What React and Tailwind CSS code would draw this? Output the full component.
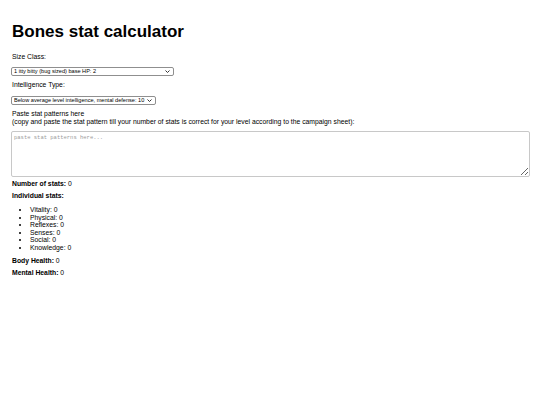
import React, { useState } from 'react';

const STATS = ['Vitality', 'Physical', 'Reflexes', 'Senses', 'Social', 'Knowledge'];

// Small select with a drawn chevron over it
function SmallSelect({ value, options, width }) {
	return (
		<div className={`relative ${width}`}>
			<select
				defaultValue={value}
				className="appearance-none block w-full h-[9px] border border-[#8f8f8f] rounded-[2px] bg-white text-[5.6px] leading-[7px] pl-[2px] pr-[5px] text-black outline-none"
			>
				{options.map(opt => (
					<option key={opt}>{opt}</option>
				))}
			</select>
			<svg className="absolute right-[4px] top-[3px] w-[5px] h-[3px] pointer-events-none" viewBox="0 0 10 6">
				<path d="M1 1 L5 5 L9 1" fill="none" stroke="#333" strokeWidth="2" />
			</svg>
		</div>
	);
}

export default function App() {
	const [text, setText] = useState('');

	return (
		<div className="min-h-[405px] bg-white pl-[12px] pr-[10px] text-black font-['Liberation_Sans',Arial,sans-serif] text-[6.8px] leading-[8px]">
			<h1 className="pt-[22px] text-[17px] leading-[20px] font-bold">Bones stat calculator</h1>

			<div className="mt-[11px]">Size Class:</div>
			<div className="mt-[6px] -ml-[1px]">
				<SmallSelect value="1 itty bitty (bug sized) base HP: 2" options={['1 itty bitty (bug sized) base HP: 2']} width="w-[163px]" />
			</div>

			<div className="mt-[5px]">Intelligence Type:</div>
			<div className="mt-[7px] -ml-[1px]">
				<SmallSelect
					value="Below average level intelligence, mental defense: 10"
					options={['Below average level intelligence, mental defense: 10']}
					width="w-[145px]"
				/>
			</div>

			<div className="mt-[5px] leading-[7.5px]">
				<div>Paste stat patterns here</div>
				<div>(copy and paste the stat pattern till your number of stats is correct for your level according to the campaign sheet):</div>
			</div>

			<textarea
				value={text}
				onChange={e => setText(e.target.value)}
				placeholder="paste stat patterns here..."
				className="block mt-[6px] -ml-[1px] w-[519px] h-[46px] border border-[#c8c8c8] rounded-[2px] px-[2px] py-[2px] font-['Liberation_Mono',monospace] text-[5.5px] leading-[7px] placeholder:text-[#9a9a9a] outline-none"
			/>

			<div className="mt-[3px]"><span className="font-bold">Number of stats:</span> 0</div>
			<div className="mt-[4px] font-bold">Individual stats:</div>

			<ul className="mt-[6px] pl-[18px] list-disc leading-[7.5px]">
				{STATS.map(s => (
					<li key={s}>{s}: 0</li>
				))}
			</ul>

			<div className="mt-[6px]"><span className="font-bold">Body Health:</span> 0</div>
			<div className="mt-[4px]"><span className="font-bold">Mental Health:</span> 0</div>
		</div>
	);
}
